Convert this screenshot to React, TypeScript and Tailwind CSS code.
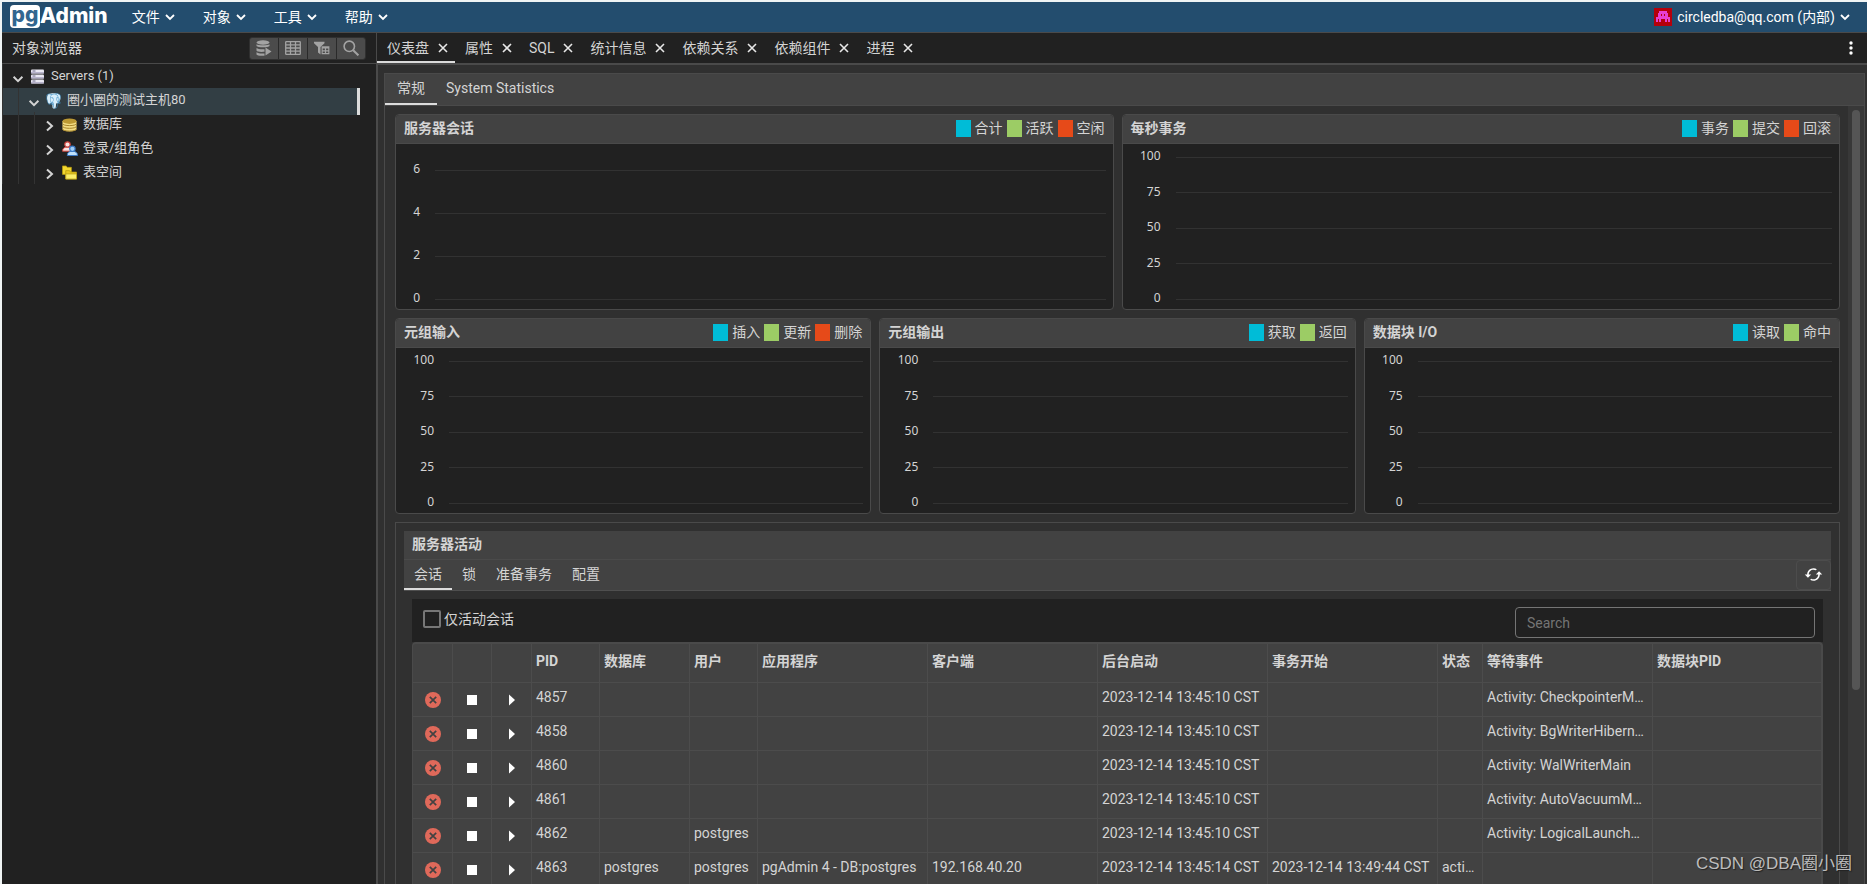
import React from 'react';
import { MdCached } from 'react-icons/md';
import { SiPostgresql } from 'react-icons/si';

type Legend = { label: string; color: string };

const CYAN = 'bg-[#00bcd7]';
const GREEN = 'bg-[#9ccc65]';
const ORANGE = 'bg-[#e64a19]';

function ChevronDown({ className = '' }: { className?: string }) {
  return (
    <svg viewBox="0 0 10 10" className={`h-[10px] w-[10px] shrink-0 ${className}`} fill="none" stroke="currentColor" strokeWidth="1.8">
      <path d="M1 3l4 4 4-4" />
    </svg>
  );
}

function ChevronRight({ className = '' }: { className?: string }) {
  return (
    <svg viewBox="0 0 10 12" className={`h-3 w-[10px] shrink-0 ${className}`} fill="none" stroke="currentColor" strokeWidth="2">
      <path d="M2 1.500L7 6l-5 4.500" />
    </svg>
  );
}

function Cross() {
  return (
    <svg viewBox="0 0 10 10" className="h-[10px] w-[10px]" stroke="currentColor" strokeWidth="1.6">
      <path d="M1 1l8 8M9 1l-8 8" />
    </svg>
  );
}

function TerminateIcon() {
  return (
    <svg viewBox="0 0 16 16" className="h-4 w-4">
      <circle cx="8" cy="8" r="8" fill="#e0695a" />
      <path d="M4.800 4.800l6.400 6.400M11.200 4.800l-6.400 6.400" stroke="#424242" strokeWidth="1.700" />
    </svg>
  );
}

function QueryIcon() {
  return (
    <svg viewBox="0 0 16 16" className="h-4 w-4" fill="currentColor">
      <ellipse cx="7" cy="2.500" rx="6.500" ry="2.200" />
      <path d="M.5 4.200c1.500 1.500 11.500 1.500 13 0V6c-1 1.800-12 1.800-13 0zM.5 8c1.500 1.300 5 1.600 8 1.200v2.600c-4 .4-7.500 0-8-1.300zM.5 12.200c1.500 1.300 5 1.500 8 1.200v2.300c-4 .4-7.500 0-8-1.200z" />
      <path d="M9.500 7.500l6 4-6 4z" />
    </svg>
  );
}

function GridIcon() {
  return (
    <svg viewBox="0 0 16 14" className="h-[14px] w-4" fill="none" stroke="currentColor" strokeWidth="1.3">
      <rect x=".7" y=".7" width="14.600" height="12.600" rx=".6" />
      <path d="M.7 3.800h14.600M.7 7h14.600M.7 10.200h14.600M5.500.7v12.600M10.500.7v12.600" />
    </svg>
  );
}

function FilterIcon() {
  return (
    <svg viewBox="0 0 16 14" className="h-[14px] w-4" fill="currentColor">
      <path d="M0 .8h10.500v1.500L6.500 6v7.500L4 11.500V6L0 2.300z" />
      <path d="M7.600 5.200h7.800v8H7.600zM8.700 7.400v1.900h2.200V7.400zm3.400 0v1.900h2.200V7.400zm-3.400 3v1.700h2.200v-1.700zm3.400 0v1.700h2.200v-1.700z" fillRule="evenodd" />
    </svg>
  );
}

function SearchIcon() {
  return (
    <svg viewBox="0 0 16 16" className="h-4 w-4" fill="none" stroke="currentColor">
      <circle cx="6.300" cy="6.300" r="5.200" strokeWidth="1.600" />
      <path d="M10.200 10.200l5.200 5.200" strokeWidth="2" />
    </svg>
  );
}

function ServersIcon() {
  return (
    <svg viewBox="0 0 15 15" className="h-[15px] w-[15px]">
      {[0, 5, 10].map((y) => (
        <g key={y}>
          <rect x="1" y={y + 0.5} width="13" height="4" rx="1" fill="#e9e7f2" />
          <rect x="1" y={y + 3} width="13" height="1.500" fill="#b7b3cb" />
          <rect x="2.500" y={y + 1.5} width="3" height="1" fill="#6f6b8a" />
        </g>
      ))}
    </svg>
  );
}

function ElephantIcon() {
  return (
    <span className="relative block h-4 w-[15px]">
      <svg viewBox="0 0 15 16" className="absolute inset-0 h-4 w-[15px]">
        <path d="M2.500 1C5 0 10.500-.2 13 1.200c2.500 1.600 1.500 5.500.2 7.800-.8 1.300-2.200 1.600-3 1.300l-.5 4.200c-.6 1.600-3 1.500-3.200-.3L6.200 10c-1.500.6-2.200 0-3 1C1 10 0 3 2.500 1z" fill="#d8eefb" />
      </svg>
      <SiPostgresql className="relative h-4 w-[15px] text-[#3f8fc4]" />
    </span>
  );
}

function DatabaseIcon() {
  return (
    <svg viewBox="0 0 15 14" className="h-[14px] w-[15px]">
      <path d="M.5 3v8c0 3.200 14 3.200 14 0V3z" fill="#f3dd84" />
      <path d="M.5 5.500c0 2.800 14 2.800 14 0M.5 8.200c0 2.800 14 2.800 14 0M.5 11c0 2.800 14 2.800 14 0" fill="none" stroke="#a8862a" strokeWidth="1" />
      <ellipse cx="7.500" cy="3.200" rx="7" ry="2.700" fill="#bd9a34" />
    </svg>
  );
}

function RolesIcon() {
  return (
    <svg viewBox="0 0 16 15" className="h-[15px] w-4">
      <path d="M.5 10.200C.5 7 2.500 6 5.500 6s4.500 1 4.500 4.200z" fill="#fbe4e2" stroke="#c8403a" />
      <circle cx="5.500" cy="3.500" r="2.700" fill="#fbe4e2" stroke="#c8403a" strokeWidth="1.200" />
      <path d="M5.300 14.500c0-3.200 2-4.300 5-4.300s5.200 1.100 5.200 4.300z" fill="#bfe0fb" stroke="#3b78c4" />
      <circle cx="10.400" cy="7.800" r="2.700" fill="#9fcdf7" stroke="#3b78c4" strokeWidth="1.200" />
    </svg>
  );
}

function FoldersIcon() {
  return (
    <svg viewBox="0 0 16 15" className="h-[15px] w-[15px]" stroke="#b59a10" strokeWidth=".8">
      <path d="M.5 9.500v-9h4l1 1.500h4.500v7.500z" fill="#f3d72f" />
      <path d="M4 14.500V5.500h4l1 1.500h6.500v7.500z" fill="#e9c81f" />
      <path d="M4 14.500V9h11.500v5.500z" fill="#fbee6a" />
    </svg>
  );
}

function AvatarIcon() {
  return (
    <svg viewBox="0 0 18 18" className="h-[18px] w-[18px]">
      <rect width="18" height="18" fill="#b5000b" />
      <path d="M5 3h8v2h1v4h2v5h-2v-3h-1v3h-2v-3H7v3H5v-3H4v3H2V9h2V5h1zM7 6v2h1V6zm3 0v2h1V6z" fill="#e83fd0" fillRule="evenodd" />
    </svg>
  );
}

const MENUS = ['文件', '对象', '工具', '帮助'];
const TABS = ['仪表盘', '属性', 'SQL', '统计信息', '依赖关系', '依赖组件', '进程'];

const TREE = [
  { label: 'Servers (1)', depth: 0, open: true, icon: <ServersIcon /> },
  { label: '圈小圈的测试主机80', depth: 1, open: true, selected: true, icon: <ElephantIcon /> },
  { label: '数据库', depth: 2, icon: <DatabaseIcon /> },
  { label: '登录/组角色', depth: 2, icon: <RolesIcon /> },
  { label: '表空间', depth: 2, icon: <FoldersIcon /> },
];

const TOOLS = [
  { name: '查询工具', icon: <QueryIcon /> },
  { name: '查看数据', icon: <GridIcon /> },
  { name: '筛选的行', icon: <FilterIcon /> },
  { name: '搜索对象', icon: <SearchIcon /> },
];

function Header() {
  return (
    <header className="flex h-[31px] shrink-0 items-center border-b border-[#4a4a4a] bg-[#234d6e] pr-[17px] pb-px pl-2 text-white">
      <a href="#" className="flex items-center font-[Inter,sans-serif] text-[21px] leading-[23px] font-extrabold">
        <span className="flex h-[23px] w-[30px] items-center justify-center rounded-[4px] bg-white pb-1 text-[#326690]">pg</span>
        <span className="pb-[2px]">Admin</span>
      </a>
      <nav className="ml-6 flex gap-7">
        {MENUS.map((m) => (
          <button key={m} type="button" className="flex items-center gap-[5px]">
            {m}
            <ChevronDown />
          </button>
        ))}
      </nav>
      <button type="button" className="ml-auto flex items-center gap-[5px]">
        <AvatarIcon />
        circledba@qq.com (内部)
        <ChevronDown />
      </button>
    </header>
  );
}

function Browser() {
  return (
    <aside className="flex w-[375px] shrink-0 flex-col border-r border-[#4a4a4a]">
      <div className="flex h-[31px] items-center justify-between border-b border-[#4a4a4a] pr-[10px] pl-[10px]">
        <h2 className="pb-px">对象浏览器</h2>
        <div className="flex gap-px overflow-hidden rounded-[3px] border border-[#303030] bg-[#2a2a2a]">
          {TOOLS.map((t) => (
            <button key={t.name} type="button" aria-label={t.name} className="flex h-[21px] w-7 items-center justify-center bg-[#4b4b4b] text-[#a3a3a3]">
              {t.icon}
            </button>
          ))}
        </div>
      </div>
      <ul className="text-[13px] leading-6">
        {TREE.map((n) => (
          <li key={n.label} className={n.selected ? 'mr-4 -mb-[3px] h-[27px] border-r-[3px] border-[#dcdcdc] bg-[#323e44]' : 'h-6'}>
            <button type="button" className="flex h-full w-full items-start text-left">
              {Array.from({ length: n.depth }, (_, i) => (
                <span key={i} className="w-4 self-stretch border-l border-[#333333]" />
              ))}
              <span className="w-[11px] self-stretch border-l border-[#333333]" />
              {n.open ? <ChevronDown className="mt-[10px] scale-110" /> : <ChevronRight className="mt-2" />}
              <span className="mr-[5px] ml-[7px] flex h-6 w-4 items-center pt-px">{n.icon}</span>
              {n.label}
            </button>
          </li>
        ))}
      </ul>
    </aside>
  );
}

function ChartCard({ title, legend, ticks, sparse = false }: { title: string; legend: Legend[]; ticks: number[]; sparse?: boolean }) {
  return (
    <section className="flex h-[196px] min-w-0 flex-1 flex-col overflow-hidden rounded-[4px] border border-[#4a4a4a] bg-[#212121]">
      <div className="flex h-[29px] shrink-0 items-center justify-between border-b border-[#4a4a4a] bg-[#424242] px-2 pb-[2px]">
        <h3 className="font-bold">{title}</h3>
        <div className="flex items-center gap-1">
          {legend.map((l) => (
            <React.Fragment key={l.label}>
              <span className={`h-[17px] w-[15px] ${l.color}`} />
              <span>{l.label}</span>
            </React.Fragment>
          ))}
        </div>
      </div>
      <div className={`flex flex-1 flex-col justify-between pr-[7px] pb-[2px] ${sparse ? 'pt-[18px]' : 'pt-[5px]'}`}>
        {ticks.map((t) => (
          <div key={t} className="flex h-4 items-center">
            <span className={`mr-[15px] pb-[2px] text-right font-['Noto_Sans',sans-serif] text-[12px] leading-4 ${sparse ? 'w-6' : 'w-[38px]'}`}>{t}</span>
            <span className="h-px flex-1 bg-[#323232]" />
          </div>
        ))}
      </div>
    </section>
  );
}

const HUNDRED = [100, 75, 50, 25, 0];

const COLUMNS: { title: string; width: string }[] = [
  { title: '', width: 'w-10' },
  { title: '', width: 'w-[39px]' },
  { title: '', width: 'w-10' },
  { title: 'PID', width: 'w-[68px]' },
  { title: '数据库', width: 'w-[90px]' },
  { title: '用户', width: 'w-[68px]' },
  { title: '应用程序', width: 'w-[170px]' },
  { title: '客户端', width: 'w-[170px]' },
  { title: '后台启动', width: 'w-[170px]' },
  { title: '事务开始', width: 'w-[170px]' },
  { title: '状态', width: 'w-[45px]' },
  { title: '等待事件', width: 'w-[170px]' },
  { title: '数据块PID', width: 'w-[170px]' },
];

const ROWS: string[][] = [
  ['4857', '', '', '', '', '2023-12-14 13:45:10 CST', '', '', 'Activity: CheckpointerM…', ''],
  ['4858', '', '', '', '', '2023-12-14 13:45:10 CST', '', '', 'Activity: BgWriterHibern…', ''],
  ['4860', '', '', '', '', '2023-12-14 13:45:10 CST', '', '', 'Activity: WalWriterMain', ''],
  ['4861', '', '', '', '', '2023-12-14 13:45:10 CST', '', '', 'Activity: AutoVacuumM…', ''],
  ['4862', '', 'postgres', '', '', '2023-12-14 13:45:10 CST', '', '', 'Activity: LogicalLaunch…', ''],
  ['4863', 'postgres', 'postgres', 'pgAdmin 4 - DB:postgres', '192.168.40.20', '2023-12-14 13:45:14 CST', '2023-12-14 13:49:44 CST', 'acti…', '', ''],
];

function SessionsTable() {
  return (
    <div className="overflow-hidden rounded-t-[4px] border-t-2 border-r-2 border-l border-[#4a4a4a] bg-[#424242]">
      <table className="w-full table-fixed border-separate border-spacing-0">
        <thead>
          <tr className="h-[39px]">
            {COLUMNS.map((c, i) => (
              <th key={i} className={`${c.width} border-r border-b border-[#4c4c4c] pb-1 pl-1 text-left font-bold whitespace-nowrap`}>
                {c.title}
              </th>
            ))}
          </tr>
        </thead>
        <tbody>
          {ROWS.map((r) => (
            <tr key={r[0]} className="h-[34px]">
              <td className="border-r border-b border-[#4c4c4c]">
                <button type="button" aria-label="终止会话" className="mx-auto block">
                  <TerminateIcon />
                </button>
              </td>
              <td className="border-r border-b border-[#4c4c4c]">
                <button type="button" aria-label="取消查询" className="mx-auto block h-[10px] w-[10px] bg-white" />
              </td>
              <td className="border-r border-b border-[#4c4c4c]">
                <button type="button" aria-label="查看详情" className="mx-auto block">
                  <svg viewBox="0 0 6 12" className="h-3 w-[6px]" fill="#fff">
                    <path d="M0 .5l6 5.500-6 5.500z" />
                  </svg>
                </button>
              </td>
              {r.map((v, i) => (
                <td key={i} className="border-r border-b border-[#4c4c4c] pb-[6px] pl-1 whitespace-nowrap">
                  {v}
                </td>
              ))}
            </tr>
          ))}
        </tbody>
      </table>
    </div>
  );
}

function Activity() {
  return (
    <section className="border border-[#4a4a4a] p-2">
      <div className="bg-[#424242]">
        <h3 className="flex h-[29px] items-center border-b border-[#4a4a4a] px-2 pb-[3px] font-bold">服务器活动</h3>
        <div className="flex h-[31px] border-b border-[#4f4f4f]">
          {['会话', '锁', '准备事务', '配置'].map((t, i) => (
            <button key={t} type="button" className={`border-b-2 px-[10px] pb-px ${i === 0 ? 'border-[#dcdcdc]' : 'border-transparent'}`}>
              {t}
            </button>
          ))}
          <button type="button" aria-label="刷新" className="ml-auto flex w-[35px] items-center justify-center rounded-[4px] border border-[#4c4c4c] pb-px text-white">
            <MdCached className="h-[19px] w-[19px]" />
          </button>
        </div>
      </div>
      <div className="mt-2 px-2">
        <div className="flex h-[43px] items-center justify-between bg-[#212121] pr-2 pl-[11px]">
          <label className="flex items-center gap-[3px] pb-[3px]">
            <input type="checkbox" className="h-[18px] w-[18px] appearance-none rounded-[2px] border-2 border-[#777777]" />
            仅活动会话
          </label>
          <input
            type="search"
            aria-label="Search"
            placeholder="Search"
            className="mt-1 h-[31px] w-[300px] rounded-[4px] border border-[#757575] bg-transparent px-[11px] placeholder:text-[#757575]"
          />
        </div>
        <SessionsTable />
      </div>
    </section>
  );
}

function Dashboard() {
  return (
    <main className="flex min-w-0 flex-1 flex-col">
      <div className="flex h-8 shrink-0 border-b-2 border-[#4a4a4a] bg-[#212121]">
        {TABS.map((t, i) => (
          <div key={t} className={`flex items-center gap-[9px] border-b-2 pt-px pr-[7px] pl-[10px] ${i === 0 ? 'border-[#dcdcdc]' : 'border-transparent'}`}>
            <button type="button">{t}</button>
            <button type="button" aria-label={`关闭 ${t}`} className="text-[#e8e8e8]">
              <Cross />
            </button>
          </div>
        ))}
        <button type="button" aria-label="更多" className="ml-auto flex w-8 items-center justify-center text-white">
          <svg viewBox="0 0 4 14" className="h-[14px] w-1" fill="currentColor">
            <circle cx="2" cy="2" r="1.700" />
            <circle cx="2" cy="7" r="1.700" />
            <circle cx="2" cy="12" r="1.700" />
          </svg>
        </button>
      </div>
      <div className="flex min-h-0 flex-1 border-l border-[#4a4a4a] bg-[#303030] pt-2 pr-[2px] pl-[6px]">
        <div className="flex min-w-0 flex-1 flex-col border-x border-t border-[#4a4a4a]">
          <div className="flex h-8 shrink-0 border-b border-[#4a4a4a] bg-[#424242]">
            <button type="button" className="border-b-2 border-[#dcdcdc] px-3 pb-[2px]">常规</button>
            <button type="button" className="border-b-2 border-transparent px-[9px] pb-[2px]">System Statistics</button>
          </div>
          <div className="flex min-h-0 flex-1 overflow-hidden">
            <div className="flex min-w-0 flex-1 flex-col gap-2 py-2 pr-2 pl-[10px]">
              <div className="flex gap-2">
                <ChartCard
                  title="服务器会话"
                  sparse
                  ticks={[6, 4, 2, 0]}
                  legend={[{ label: '合计', color: CYAN }, { label: '活跃', color: GREEN }, { label: '空闲', color: ORANGE }]}
                />
                <ChartCard
                  title="每秒事务"
                  ticks={HUNDRED}
                  legend={[{ label: '事务', color: CYAN }, { label: '提交', color: GREEN }, { label: '回滚', color: ORANGE }]}
                />
              </div>
              <div className="flex gap-2">
                <ChartCard
                  title="元组输入"
                  ticks={HUNDRED}
                  legend={[{ label: '插入', color: CYAN }, { label: '更新', color: GREEN }, { label: '删除', color: ORANGE }]}
                />
                <ChartCard
                  title="元组输出"
                  ticks={HUNDRED}
                  legend={[{ label: '获取', color: CYAN }, { label: '返回', color: GREEN }]}
                />
                <ChartCard
                  title="数据块 I/O"
                  ticks={HUNDRED}
                  legend={[{ label: '读取', color: CYAN }, { label: '命中', color: GREEN }]}
                />
              </div>
              <Activity />
            </div>
            <div className="w-4 shrink-0 bg-[#383838] px-1 pt-1">
              <div className="h-[580px] rounded-full bg-[#555555]" />
            </div>
          </div>
        </div>
      </div>
    </main>
  );
}

export default function App() {
  return (
    <div className="relative h-screen overflow-hidden bg-[#f0f4f4] pt-[2px] pl-[2px] font-[Roboto,'Noto_Sans_CJK_SC',sans-serif] text-[14px] leading-5 text-[#d4d4d4]">
      <div className="flex h-full flex-col bg-[#212121]">
        <Header />
        <div className="flex min-h-0 flex-1">
          <Browser />
          <Dashboard />
        </div>
      </div>
      <p className="absolute right-[15px] bottom-2 font-['Liberation_Sans','Noto_Sans_CJK_SC',sans-serif] text-[17px] leading-6 text-[#bdbdbd] [text-shadow:1px_1px_1px_#222]">
        CSDN @DBA圈小圈
      </p>
    </div>
  );
}
